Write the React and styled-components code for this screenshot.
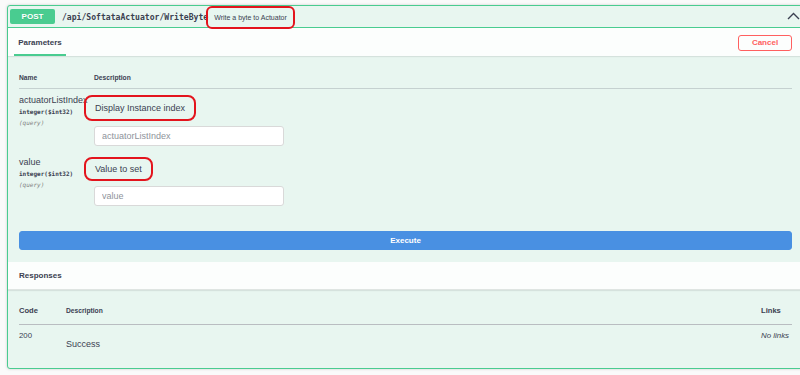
import styled, { createGlobalStyle } from "styled-components";

const GlobalStyle = createGlobalStyle`
  html, body {
    margin: 0;
    padding: 0;
    background: #fafafa;
    overflow: hidden;
  }
  body {
    font-family: "Liberation Sans", Arial, sans-serif;
    color: #3b4151;
  }
`;

const params = [
  { name: "actuatorListIndex", type: "integer", format: "$int32", description: "Display Instance index", boxH: 26 },
  { name: "value", type: "integer", format: "$int32", description: "Value to set", boxH: 24 },
];

const App = () => {
  return (
    <Page>
      <GlobalStyle />
      <OpBlock>
        <Summary>
          <Method>POST</Method>
          <Path>/api/SoftataActuator/WriteByte</Path>
          <SummaryNote>Write a byte to Actuator</SummaryNote>
          <Spacer />
          <Chevron width="13" height="8" viewBox="0 0 13 8">
            <path d="M1 7 L6.5 1.5 L12 7" fill="none" stroke="#3b4151" strokeWidth="1.4" />
          </Chevron>
        </Summary>

        <SectionBar>
          <Tab>Parameters</Tab>
          <CancelButton>Cancel</CancelButton>
        </SectionBar>

        <ParamArea>
          <ParamHead>
            <NameCol>Name</NameCol>
            <DescCol>Description</DescCol>
          </ParamHead>
          {params.map((p) => (
            <ParamRow key={p.name}>
              <NameCell>
                <ParamName>{p.name}</ParamName>
                <ParamType>
                  {p.type}
                  <span>({p.format})</span>
                </ParamType>
                <ParamIn>(query)</ParamIn>
              </NameCell>
              <DescCell>
                <Marked $h={p.boxH}>{p.description}</Marked>
                <Input placeholder={p.name} />
              </DescCell>
            </ParamRow>
          ))}
          <ExecuteWrap>
            <ExecuteButton>Execute</ExecuteButton>
          </ExecuteWrap>
        </ParamArea>

        <SectionBar $plain>
          <Tab $plain>Responses</Tab>
        </SectionBar>

        <ResponseArea>
          <RespHead>
            <CodeCol>Code</CodeCol>
            <RespDesc>Description</RespDesc>
            <LinksCol>Links</LinksCol>
          </RespHead>
          <RespRow>
            <CodeCell>200</CodeCell>
            <SuccessCell>Success</SuccessCell>
            <NoLinks>No links</NoLinks>
          </RespRow>
        </ResponseArea>
      </OpBlock>
    </Page>
  );
};

const Page = styled.div`
  width: 800px;
  height: 375px;
  overflow: hidden;
  padding: 5px 0 0 7px;
  box-sizing: border-box;
`;

const OpBlock = styled.div`
  width: 795px;
  border: 1px solid #49cc90;
  border-radius: 3px;
  background: #e8f6f0;
  box-shadow: 0 0 3px rgba(0, 0, 0, 0.19);
`;

const Summary = styled.div`
  display: flex;
  align-items: center;
  height: 21px;
  padding: 0 3px 0 2px;
  border-bottom: 1px solid #49cc90;
`;

const Method = styled.span`
  width: 45px;
  height: 15px;
  line-height: 15px;
  text-align: center;
  background: #49cc90;
  color: #fff;
  font-weight: bold;
  font-size: 8px;
  border-radius: 2px;
  text-shadow: 0 1px 0 rgba(0, 0, 0, 0.1);
`;

const Path = styled.span`
  margin-left: 7px;
  font-family: "DejaVu Sans Mono", "Liberation Mono", monospace;
  font-weight: bold;
  font-size: 8.1px;
  color: #3b4151;
  white-space: nowrap;
`;

const SummaryNote = styled.span`
  margin-left: -2px;
  height: 23px;
  margin-top: 2px;
  box-sizing: border-box;
  padding: 0 6px;
  display: flex;
  align-items: center;
  border: 2px solid #e3141d;
  border-radius: 6px;
  font-size: 7px;
  color: #3b4151;
  white-space: nowrap;
  position: relative;
  z-index: 1;
`;

const Spacer = styled.div`
  flex: 1;
`;

const Chevron = styled.svg`
  display: block;
  margin-top: -1px;
`;

const SectionBar = styled.div`
  display: flex;
  align-items: center;
  justify-content: space-between;
  height: 28px;
  padding: 0 11px 0 6px;
  background: rgba(255, 255, 255, 0.85);
  box-shadow: 0 1px 1px rgba(0, 0, 0, 0.08);
  border-bottom: ${(p) => (p.$plain ? "1px solid #dfe5e2" : "none")};
  box-sizing: border-box;
`;

const Tab = styled.div`
  align-self: stretch;
  display: flex;
  align-items: center;
  padding: 0 5px;
  margin-top: ${(p) => (p.$plain ? "0" : "2px")};
  width: ${(p) => (p.$plain ? "auto" : "42px")};
  justify-content: center;
  font-size: 8px;
  font-weight: bold;
  color: #3b4151;
  border-bottom: ${(p) => (p.$plain ? "none" : "2px solid #49cc90")};
  margin-left: ${(p) => (p.$plain ? "5px" : "0")};
  padding-left: ${(p) => (p.$plain ? "0" : "5px")};
`;

const CancelButton = styled.button`
  width: 54px;
  height: 16px;
  padding: 0;
  background: transparent;
  border: 1.5px solid #ff6060;
  border-radius: 3px;
  color: #ff6060;
  font-family: "Liberation Sans", Arial, sans-serif;
  font-weight: bold;
  font-size: 8px;
  margin-top: 1px;
`;

const ParamArea = styled.div`
  padding: 0 11px 12px 11px;
`;

const ParamHead = styled.div`
  display: flex;
  padding-top: 15px;
  padding-bottom: 3px;
  border-bottom: 1px solid rgba(59, 65, 81, 0.2);
  font-size: 6.7px;
  font-weight: bold;
  line-height: 14px;
`;

const NameCol = styled.div`
  width: 75px;
`;

const DescCol = styled.div`
  flex: 1;
`;

const ParamRow = styled.div`
  display: flex;
  padding: 6px 0 4px;

  & + & {
    padding-top: 7px;
  }
`;

const NameCell = styled.div`
  width: 75px;
  flex-shrink: 0;
`;

const ParamName = styled.div`
  font-size: 9px;
  line-height: 11px;
  color: #3b4151;
  white-space: nowrap;
`;

const ParamType = styled.div`
  font-family: "DejaVu Sans Mono", "Liberation Mono", monospace;
  font-weight: bold;
  font-size: 6px;
  line-height: 11px;
  color: #3b4151;

  span {
    font-weight: 600;
  }
`;

const ParamIn = styled.div`
  font-family: "DejaVu Sans Mono", "Liberation Mono", monospace;
  font-style: italic;
  font-size: 6px;
  line-height: 11px;
  color: #808080;
`;

const DescCell = styled.div`
  display: flex;
  flex-direction: column;
  align-items: flex-start;
`;

const Marked = styled.span`
  height: ${(p) => p.$h}px;
  box-sizing: border-box;
  display: flex;
  align-items: center;
  margin-left: -10px;
  padding: 0 9px;
  border: 2px solid #e3141d;
  border-radius: 8px;
  font-size: 9px;
  color: #3b4151;
  white-space: nowrap;
`;

const Input = styled.input`
  margin-top: 5px;
  width: 190px;
  height: 20px;
  box-sizing: border-box;
  padding: 0 7px;
  border: 1px solid #d9d9d9;
  border-radius: 3px;
  background: #fff;
  font-family: "Liberation Sans", Arial, sans-serif;
  font-size: 9px;
  outline: none;

  &::placeholder {
    color: #8e939b;
  }
`;

const ExecuteWrap = styled.div`
  padding-top: 21px;
`;

const ExecuteButton = styled.button`
  display: block;
  width: 100%;
  height: 19px;
  padding: 0;
  background: #4990e2;
  border: 1px solid #4990e2;
  border-radius: 3px;
  color: #fff;
  font-family: "Liberation Sans", Arial, sans-serif;
  font-weight: bold;
  font-size: 8px;
`;

const ResponseArea = styled.div`
  padding: 0 11px 18px 11px;
`;

const RespHead = styled.div`
  display: flex;
  align-items: center;
  padding-top: 15px;
  padding-bottom: 7px;
  border-bottom: 1px solid #b9bdc1;
  line-height: 12px;
  font-weight: bold;
  color: #3b4151;
`;

const CodeCol = styled.div`
  width: 47px;
  font-size: 7.6px;
`;

const RespDesc = styled.div`
  flex: 1;
  font-size: 6.7px;
`;

const LinksCol = styled.div`
  width: 31px;
  font-size: 7.6px;
`;

const RespRow = styled.div`
  display: flex;
  align-items: flex-start;
  padding-top: 5px;
  line-height: 11px;
`;

const CodeCell = styled.div`
  width: 47px;
  font-size: 7.8px;
  color: #3b4151;
`;

const SuccessCell = styled.div`
  flex: 1;
  padding-top: 9px;
  font-size: 9px;
  color: #3b4151;
`;

const NoLinks = styled.div`
  width: 31px;
  font-size: 7.9px;
  font-style: italic;
  color: #3b4151;
  white-space: nowrap;
`;

export default App;
